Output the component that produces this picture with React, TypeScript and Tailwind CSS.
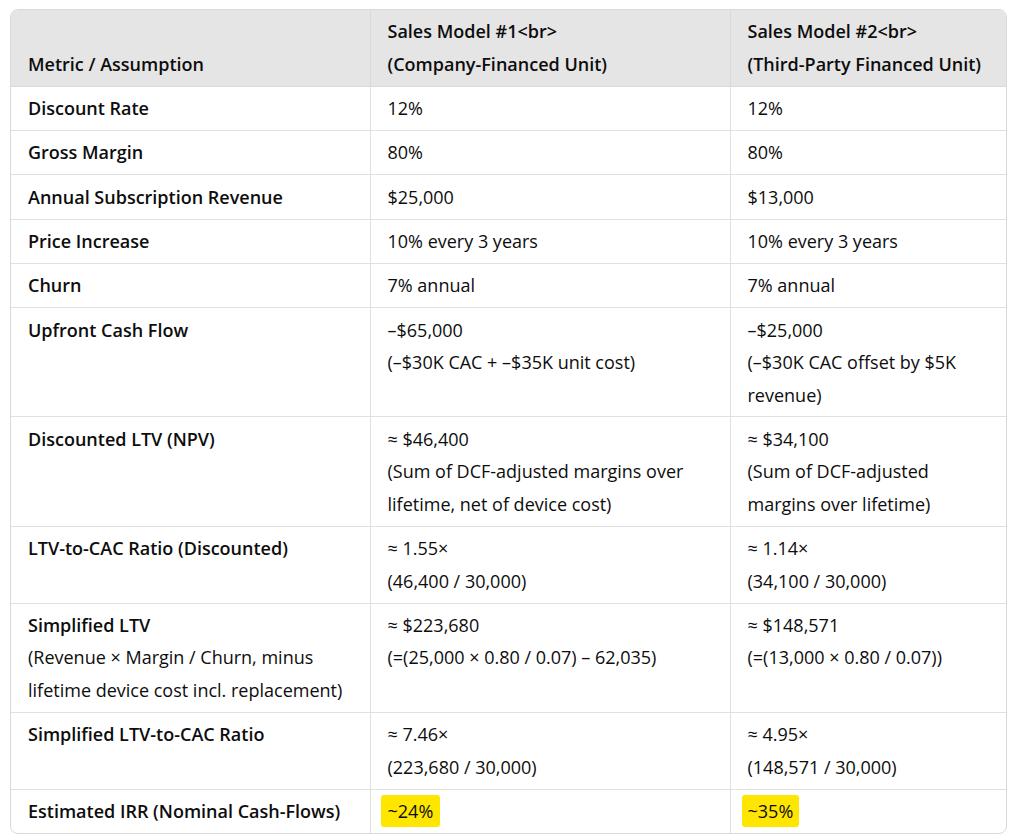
import React from "react";

type Cell = React.ReactNode;

const rows: { label: Cell; a: Cell; b: Cell }[] = [
  { label: "Discount Rate", a: "12%", b: "12%" },
  { label: "Gross Margin", a: "80%", b: "80%" },
  { label: "Annual Subscription Revenue", a: "$25,000", b: "$13,000" },
  { label: "Price Increase", a: "10% every 3 years", b: "10% every 3 years" },
  { label: "Churn", a: "7% annual", b: "7% annual" },
  {
    label: "Upfront Cash Flow",
    a: (
      <>
        –$65,000
        <br />
        (–$30K CAC + –$35K unit cost)
      </>
    ),
    b: (
      <>
        –$25,000
        <br />
        (–$30K CAC offset by $5K
        <br />
        revenue)
      </>
    ),
  },
  {
    label: "Discounted LTV (NPV)",
    a: (
      <>
        ≈ $46,400
        <br />
        (Sum of DCF-adjusted margins over
        <br />
        lifetime, net of device cost)
      </>
    ),
    b: (
      <>
        ≈ $34,100
        <br />
        (Sum of DCF-adjusted
        <br />
        margins over lifetime)
      </>
    ),
  },
  {
    label: "LTV-to-CAC Ratio (Discounted)",
    a: (
      <>
        ≈ 1.55×
        <br />
        (46,400 / 30,000)
      </>
    ),
    b: (
      <>
        ≈ 1.14×
        <br />
        (34,100 / 30,000)
      </>
    ),
  },
  {
    label: (
      <>
        Simplified LTV
        <br />
        <span className="font-normal">
          (Revenue × Margin / Churn, minus
          <br />
          lifetime device cost incl. replacement)
        </span>
      </>
    ),
    a: (
      <>
        ≈ $223,680
        <br />
        (=(25,000 × 0.80 / 0.07) – 62,035)
      </>
    ),
    b: (
      <>
        ≈ $148,571
        <br />
        (=(13,000 × 0.80 / 0.07))
      </>
    ),
  },
  {
    label: "Simplified LTV-to-CAC Ratio",
    a: (
      <>
        ≈ 7.46×
        <br />
        (223,680 / 30,000)
      </>
    ),
    b: (
      <>
        ≈ 4.95×
        <br />
        (148,571 / 30,000)
      </>
    ),
  },
  {
    label: "Estimated IRR (Nominal Cash-Flows)",
    a: <span className="inline-block align-top bg-[#ffe600] rounded-[3px] -ml-[7px] px-[7px]">~24%</span>,
    b: <span className="inline-block align-top bg-[#ffe600] rounded-[3px] -ml-[6px] px-[6px]">~35%</span>,
  },
];

export default function App() {
  return (
    <div
      className="bg-white min-h-[835px] pl-[10px] pt-[9px] text-[#0d0d0d]"
      style={{ fontFamily: '"Open Sans", "Noto Sans", sans-serif' }}
    >
      <div className="w-[997px] border border-[#d9d9d9] rounded-[8px] overflow-hidden">
        <table className="w-full table-fixed border-collapse text-[18px] leading-[32.5px]">
          <colgroup>
            <col className="w-[359px]" />
            <col className="w-[360px]" />
            <col />
          </colgroup>
          <thead>
            <tr className="bg-[#e5e5e5]">
              <th className="text-left align-bottom font-semibold px-[17px] py-[5.4px] border-b border-[#d9d9d9]">
                Metric / Assumption
              </th>
              <th className="text-left align-bottom font-semibold px-[17px] py-[5.4px] border-b border-l border-[#d9d9d9] whitespace-nowrap">
                Sales Model #1&lt;br&gt;
                <br />
                (Company-Financed Unit)
              </th>
              <th className="text-left align-bottom font-semibold px-[17px] py-[5.4px] border-b border-l border-[#d9d9d9] whitespace-nowrap">
                Sales Model #2&lt;br&gt;
                <br />
                (Third-Party Financed Unit)
              </th>
            </tr>
          </thead>
          <tbody>
            {rows.map((r, i) => {
              const last = i === rows.length - 1;
              const b = last ? "" : "border-b";
              return (
                <tr key={i}>
                  <td className={`align-top font-semibold px-[17px] py-[5.4px] whitespace-nowrap border-[#e0e0e0] ${b}`}>
                    {r.label}
                  </td>
                  <td className={`align-top px-[17px] py-[5.4px] whitespace-nowrap border-l border-[#e0e0e0] ${b}`}>
                    {r.a}
                  </td>
                  <td className={`align-top px-[17px] py-[5.4px] whitespace-nowrap border-l border-[#e0e0e0] ${b}`}>
                    {r.b}
                  </td>
                </tr>
              );
            })}
          </tbody>
        </table>
      </div>
    </div>
  );
}
